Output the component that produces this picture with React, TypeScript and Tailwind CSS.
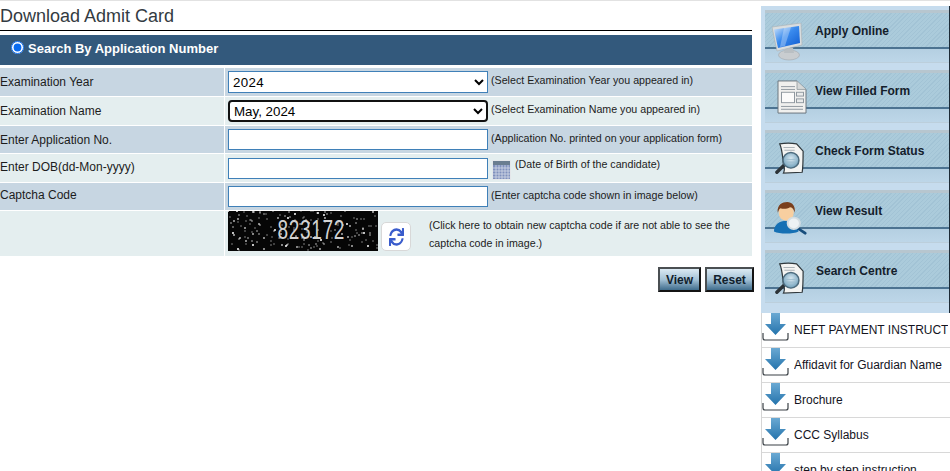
import React from "react";
import { FaSync } from "react-icons/fa";

// fixed pseudo random noise for the captcha picture
const noise = Array.from({ length: 170 }, (_, i) => ({
  x: (i * 73 + ((i * i * 17) % 41)) % 150,
  y: (i * 37 + ((i * i * 11) % 29)) % 40,
  r: i % 4 === 0 ? 1.05 : 0.7,
  o: i % 3 === 0 ? 0.95 : 0.65,
}));

const MonitorIcon = () => (
  <svg width="33" height="38" viewBox="0 0 33 38">
    <defs>
      <linearGradient id="screen" x1="0" y1="0" x2="1" y2="1">
        <stop offset="0" stopColor="#d5e8fb" />
        <stop offset="0.45" stopColor="#3a8bee" />
        <stop offset="1" stopColor="#0f5bd0" />
      </linearGradient>
    </defs>
    <ellipse cx="17" cy="32" rx="10.5" ry="5" fill="#c9cdd0" stroke="#a2a8ac" strokeWidth="0.6" />
    <path d="M13 25h8l1 5H12z" fill="#b9bfc3" />
    <path d="M0 4 29 0l1 22-25 6z" fill="#d9dddf" stroke="#aab0b4" strokeWidth="0.6" />
    <path d="M2 6.5 27 3l1 17-22 5z" fill="url(#screen)" />
    <path d="M12 5 19 4 13 23 8 24z" fill="#ffffff" fillOpacity="0.3" />
  </svg>
);

const FormIcon = () => (
  <svg width="30" height="34" viewBox="0 0 30 36" preserveAspectRatio="none">
    <path d="M1 1h19l9 9v25H1z" fill="#f0f0ee" stroke="#69747c" strokeWidth="1" />
    <path d="M20 1v9h9" fill="#d5d8d8" stroke="#8e979c" strokeWidth="0.8" />
    <path d="M4 7h14M4 10h14M4 28h22M4 31h22" stroke="#8f989f" strokeWidth="1" />
    <rect x="4.5" y="13" width="13" height="11" fill="#fbfbfa" stroke="#8f989f" />
    <rect x="19.5" y="13" width="7" height="4" fill="#e9ebeb" stroke="#8f989f" />
    <rect x="19.5" y="20" width="7" height="4" fill="#e9ebeb" stroke="#8f989f" />
  </svg>
);

const SearchDocIcon = ({ id }: { id: string }) => (
  <svg width="30" height="33" viewBox="0 0 32 36" preserveAspectRatio="none">
    <defs>
      <radialGradient id={id} cx="0.5" cy="0.4" r="0.6">
        <stop offset="0" stopColor="#dbeaf2" />
        <stop offset="1" stopColor="#6f9fba" />
      </radialGradient>
    </defs>
    <path d="M5 2c6-1 12-1 18 0l7 8c0 8 0 16-1 23l-20 1c2-4 1-7 0-10C8 17 8 9 5 2z" fill="#f4f4f2" stroke="#30383c" strokeWidth="1.3" />
    <path d="M9 6h12M10 9h11" stroke="#a5adb2" strokeWidth="1" />
    <path d="M2 33 10 25" stroke="#2c3338" strokeWidth="3.6" strokeLinecap="round" />
    <circle cx="17" cy="20" r="8.5" fill={`url(#${id})`} stroke="#4d6b7d" strokeWidth="1.6" />
    <path d="M12 19h10M12 22h9" stroke="#9bbccd" strokeWidth="1" />
  </svg>
);

const PersonIcon = () => (
  <svg width="34" height="34" viewBox="0 0 36 38" preserveAspectRatio="none">
    <path d="M1 34c0-8 6-12 13-12s13 4 13 12c-6 3-20 3-26 0z" fill="#1670b4" />
    <ellipse cx="14" cy="13" rx="8" ry="9" fill="#f8cfa0" />
    <path d="M5 13C4 4 10 1 15 1s9 4 8 12c-1-4-3-6-5-6-3 2-8 2-10 1-2 1-2 3-3 5z" fill="#7a3f1d" />
    <path d="M27 31l7 5" stroke="#174d7c" strokeWidth="3" strokeLinecap="round" />
    <circle cx="22" cy="25" r="6.5" fill="#eef2f4" stroke="#d4dde2" strokeWidth="2" />
  </svg>
);

const DownloadIcon = ({ id }: { id: string }) => (
  <svg width="27" height="30" viewBox="0 0 27 30" className="shrink-0">
    <defs>
      <linearGradient id={id} x1="0" y1="0" x2="0" y2="1">
        <stop offset="0" stopColor="#6aa9d3" />
        <stop offset="1" stopColor="#2473ac" />
      </linearGradient>
    </defs>
    <path d="M9 0h9v11h6L13.5 22 3 11h6z" fill={`url(#${id})`} />
    <path d="M1 20v5c0 1 1 2 2 2h21c1 0 2-1 2-2v-5" fill="none" stroke="#3b4146" strokeWidth="1.2" />
  </svg>
);

const CalendarIcon = () => (
  <svg width="19" height="20" viewBox="0 0 19 20" className="shrink-0">
    <rect width="19" height="20" fill="#e4e7ea" />
    <rect x="1" y="1" width="17" height="4" fill="#6a7d90" />
    <rect x="1" y="5" width="17" height="14" fill="#7f90bd" />
    <path d="M1 8h17M1 11h17M1 14h17M1 17h17M4 5v14M7 5v14M10 5v14M13 5v14M16 5v14" stroke="#d6dbe8" strokeWidth="0.8" />
  </svg>
);

type RowProps = {
  label: string;
  tone: "dark" | "light";
  height: string;
  labelPad?: string;
  children: React.ReactNode;
};

const Row = ({ label, tone, height, labelPad = "", children }: RowProps) => {
  const bg = tone === "dark" ? "bg-[#c7d6e2]" : "bg-[#e4eeef]";
  return (
    <div className={`flex gap-px ${height}`}>
      <div className={`w-[224px] shrink-0 flex items-center text-[12px] text-[#1c1c1c] ${bg} ${labelPad}`}>
        {label}
      </div>
      <div className={`flex-1 flex items-center pl-[3px] ${bg}`}>{children}</div>
    </div>
  );
};

const TextBox = () => (
  <input type="text" className="w-[260px] h-[21px] bg-white border border-[#3f80b8] shrink-0" />
);

const Hint = ({ text }: { text: string }) => (
  <span className="ml-[3px] mb-1 text-[10.67px] text-[#1c1c1c]">{text}</span>
);

const menu = [
  { label: "Apply Online", icon: <MonitorIcon />, iconBox: "ml-[7px] mt-[10px]", text: "ml-0" },
  { label: "View Filled Form", icon: <FormIcon />, iconBox: "ml-[12px] mt-[7px]", text: "ml-0" },
  { label: "Check Form Status", icon: <SearchDocIcon id="doc1" />, iconBox: "ml-[10px] mt-[9px]", text: "ml-0" },
  { label: "View Result", icon: <PersonIcon />, iconBox: "ml-[8px] mt-[8px]", text: "ml-0" },
  { label: "Search Centre", icon: <SearchDocIcon id="doc2" />, iconBox: "ml-[10px] mt-[9px]", text: "ml-px" },
];

const downloads = ["NEFT PAYMENT INSTRUCTIONS", "Affidavit for Guardian Name", "Brochure", "CCC Syllabus", "step by step instruction"];

const buttonClass =
  "h-[25px] border-2 border-t-[#4a4f52] border-l-[#4a4f52] border-r-[#141414] border-b-[#141414] bg-linear-to-b from-[#dceaf3] via-[#a4c2d6] to-[#3f6d8d] text-[12px] font-bold text-[#10202c]";

export default function App() {
  return (
    <div className="w-[950px] h-[471px] overflow-hidden flex bg-white border-t border-[#e2e2e2] font-['Liberation_Sans',Arial,sans-serif]">
      {/* main form */}
      <div className="w-[754px] shrink-0">
        <div className="w-[752px]">
          <h1 className="h-[30px] pt-[3px] text-[18px] leading-[24px] text-[#333b42] border-b border-black">
            Download Admit Card
          </h1>
          <div className="mt-1 h-[30px] bg-[#33597c] flex items-center pl-[11px] pb-0.5 text-[13px] font-bold text-white">
            <input type="radio" checked readOnly className="w-[13px] h-[13px] mb-1 mr-1 accent-[#0a6cf0]" />
            Search By Application Number
          </div>
          <div className="mt-[3px] flex flex-col gap-px">
            <Row label="Examination Year" tone="dark" height="h-[28px]">
              <select defaultValue="2024" className="w-[260px] h-[22px] bg-white border border-[#3f80b8] text-[13.33px] tracking-[0.3px] text-black">
                <option>2024</option>
              </select>
              <Hint text="(Select Examination Year you appeared in)" />
            </Row>
            <Row label="Examination Name" tone="light" height="h-[28px]">
              <select defaultValue="May, 2024" className="w-[260px] h-[22px] bg-white border-2 border-[#111] rounded-[4px] text-[13.33px] text-black">
                <option>May, 2024</option>
              </select>
              <Hint text="(Select Examination Name you appeared in)" />
            </Row>
            <Row label="Enter Application No." tone="dark" height="h-[27px]">
              <TextBox />
              <Hint text="(Application No. printed on your application form)" />
            </Row>
            <Row label="Enter DOB(dd-Mon-yyyy)" tone="light" height="h-[28px]" labelPad="pb-0.5">
              <TextBox />
              <span className="ml-1 mt-[3px]">
                <CalendarIcon />
              </span>
              <span className="ml-1 mb-2 text-[10.67px] text-[#1c1c1c]">(Date of Birth of the candidate)</span>
            </Row>
            <Row label="Captcha Code" tone="dark" height="h-[27px]" labelPad="pb-1">
              <TextBox />
              <Hint text="(Enter captcha code shown in image below)" />
            </Row>
            <div className="flex gap-px h-[45px]">
              <div className="w-[224px] shrink-0 bg-[#e4eeef]" />
              <div className="flex-1 flex pl-[3px] bg-[#e4eeef]">
                <div className="relative w-[150px] h-[40px] bg-[#060606] overflow-hidden shrink-0">
                  <svg width="150" height="40" viewBox="0 0 150 40" className="absolute inset-0">
                    {noise.map((d, i) => (
                      <circle key={i} cx={d.x} cy={d.y} r={d.r} fill="#ffffff" fillOpacity={d.o} />
                    ))}
                  </svg>
                  <span className="absolute left-[36px] top-[3px] w-[84px] text-center scale-x-[.68] text-[28px] leading-[32px] text-[#d2d2d2] tracking-[1px]">
                    823172
                  </span>
                </div>
                <button className="ml-[3px] mt-[11px] w-[30px] h-[29px] bg-white border border-[#d8d8d8] rounded-[5px] flex items-center justify-center shrink-0">
                  <FaSync className="w-[15px] h-[18px] text-[#3a5ccc]" preserveAspectRatio="none" />
                </button>
                <p className="ml-[18px] mt-[5px] text-[10.67px] leading-[18px] text-[#1c1c1c]">
                  (Click here to obtain new captcha code if are not able to see the
                  <br />
                  captcha code in image.)
                </p>
              </div>
            </div>
          </div>
        </div>
        <div className="mt-[11px] flex justify-end gap-1">
          <button className={`w-[43px] ${buttonClass}`}>View</button>
          <button className={`w-[49px] ${buttonClass}`}>Reset</button>
        </div>
      </div>

      {/* side bar */}
      <div className="ml-[7px] flex-1 mt-[5px] min-w-0">
        <div className="bg-[#c6dcee] pl-1 pt-1 h-[307px] flex flex-col gap-[4px] border-r border-[#1c2a36]">
          {menu.map((m) => (
            <div key={m.label} className="relative h-[53px] mb-[3px] shrink-0 border-t-[3px] border-[#b7c6cf] border-b border-b-[#bccfdc] bg-linear-to-b from-[#9dbdd2] to-[#bdd6e8]">
              <div className="h-[36px] flex items-center border-b-2 border-[#4c7391] bg-[#abcbdb] bg-[repeating-linear-gradient(135deg,#abcbdb_0,#abcbdb_2px,#a2c3d5_2px,#a2c3d5_3px)] pl-[50px] pt-0.5 text-[12px] font-bold text-[#14202b]">
                <span className={m.text}>{m.label}</span>
              </div>
              <div className={`absolute left-0 top-0 ${m.iconBox}`}>{m.icon}</div>
            </div>
          ))}
        </div>
        <div className="border-l border-[#d5d5d5]">
          {downloads.map((d, i) => (
            <div key={d} className="h-[35px] flex border-b border-[#d8d8d8] overflow-hidden whitespace-nowrap">
              <DownloadIcon id={`arrow${i}`} />
              <span className="ml-[5px] mr-[2px] flex-1 min-w-0 overflow-hidden mt-[10px] text-[12px] leading-[15px] text-[#14141e]">{d}</span>
            </div>
          ))}
        </div>
      </div>
    </div>
  );
}
